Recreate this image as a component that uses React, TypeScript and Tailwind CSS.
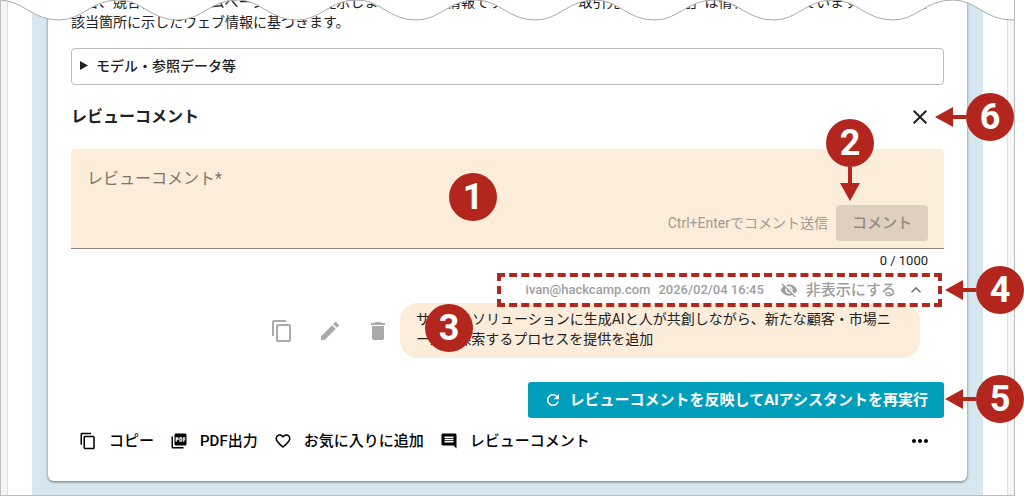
import { useState } from 'react';
import type { ReactNode } from 'react';
import {
  MdClose,
  MdComment,
  MdContentCopy,
  MdDelete,
  MdEdit,
  MdExpandLess,
  MdFavoriteBorder,
  MdMoreHoriz,
  MdPictureAsPdf,
  MdRefresh,
  MdVisibilityOff,
} from 'react-icons/md';

const MAX_LENGTH = 1000;

// Numbered red circle used by the manual's annotations
function Badge({ children }: { children: ReactNode }) {
  return (
    <span className="flex size-12 shrink-0 items-center justify-center rounded-full bg-[#b3261e] text-4xl leading-none font-bold text-white">
      {children}
    </span>
  );
}

function LeftArrow() {
  return (
    <svg width="31" height="20" viewBox="0 0 31 20" fill="#b3261e">
      <path d="M0 10 18 0v8h13v4H18v8z" />
    </svg>
  );
}

function DownArrow() {
  return (
    <svg width="20" height="34" viewBox="0 0 20 34" fill="#b3261e">
      <path d="M8 0h4v16h8L10 34 0 16h8z" />
    </svg>
  );
}

// Torn paper edge across the top of the page
function WaveEdge() {
  const half = 59.7;
  const start = -1.7;
  let line = `M${start} 0`;
  for (let i = 0; i < 17; i++) {
    const x = start + i * half;
    const from = i % 2 === 0 ? 0 : 20;
    const to = 20 - from;
    line += ` C${x + 24} ${from} ${x + 32} ${to} ${x + half} ${to}`;
  }
  return (
    <svg
      className="pointer-events-none absolute inset-x-0 top-0 h-6 w-full"
      viewBox="0 0 1015 24"
      preserveAspectRatio="none"
    >
      <path d={`${line} H1016 V-2 H-2z`} fill="#fff" />
      <path d={`${line} H1016`} fill="none" stroke="#aaa" />
    </svg>
  );
}

function FooterAction({ icon, label }: { icon: ReactNode; label: string }) {
  return (
    <button type="button" className="flex items-center gap-3 text-[15px] font-medium text-black">
      {icon}
      {label}
    </button>
  );
}

export default function App() {
  const [comment, setComment] = useState('');

  return (
    <div className="overflow-hidden bg-white pr-[9px] font-['Roboto','Noto_Sans_CJK_JP',sans-serif] text-[#212121]">
      <div className="relative border-x border-b border-[#bdbdbd] bg-[#f4f6f6] px-1.5">
        <div className="border-x border-[#e0e0e0] bg-white px-6">
          <div className="bg-[#d6e7ef] px-4 pb-3.5">
            <main className="flow-root rounded-b-md bg-white px-[23px] pb-7 shadow-[0_1px_3px_rgba(0,0,0,0.5)]">
              <p className="-mt-2 h-14 text-sm leading-5 whitespace-nowrap">
                場合、競合他社のホームページの情報を提示します。最新の情報です。ただし、「取引先企業の状況」は情報に基づいていますが、各項目
                <br />
                該当箇所に示したウェブ情報に基づきます。
              </p>

              <details className="rounded border border-[#bdbdbd] px-2 pb-0.5">
                <summary className="flex h-[33px] cursor-pointer list-none items-center gap-2 text-sm font-medium">
                  <svg width="8" height="9" viewBox="0 0 8 9" fill="currentColor">
                    <path d="M0 0 8 4.500 0 9z" />
                  </svg>
                  モデル・参照データ等
                </summary>
              </details>

              <div className="relative flex h-16 items-center justify-between">
                <h2 className="text-base font-bold">レビューコメント</h2>
                <button type="button" aria-label="閉じる" className="mr-3">
                  <MdClose size={24} />
                </button>
                <div className="absolute -right-[70px] flex items-center">
                  <LeftArrow />
                  <Badge>6</Badge>
                </div>
              </div>

              <div className="relative flex h-[100px] flex-col rounded-t border-b border-[#8b8178] bg-[#fcecda] px-4 pb-[7px]">
                <textarea
                  aria-label="レビューコメント"
                  placeholder="レビューコメント*"
                  maxLength={MAX_LENGTH}
                  value={comment}
                  onChange={(e) => setComment(e.target.value)}
                  className="block w-full flex-1 resize-none overflow-hidden bg-transparent pt-[18px] text-base outline-none placeholder:text-[#7e766d]"
                />
                <div className="flex items-center justify-end gap-2">
                  <span className="text-sm text-[#a09b95]">Ctrl+Enterでコメント送信</span>
                  <button
                    type="button"
                    disabled={comment.length === 0}
                    className="h-9 rounded bg-[#decfbf] px-4 text-[15px] font-medium text-[#958b80]"
                  >
                    コメント
                  </button>
                </div>
                <div className="absolute top-6 left-[378px]">
                  <Badge>1</Badge>
                </div>
                <div className="absolute -top-[30px] right-[70px] flex flex-col items-center">
                  <Badge>2</Badge>
                  <DownArrow />
                </div>
              </div>
              <p className="pr-4 text-right text-[13px] leading-6">
                {comment.length} / {MAX_LENGTH}
              </p>

              <div className="relative flex h-[30px] items-center justify-end gap-2 pt-1 pr-[18px] text-[#9e9e9e]">
                <span className="text-[13px] font-medium">ivan@hackcamp.com</span>
                <time className="text-[13px] font-medium">2026/02/04 16:45</time>
                <button type="button" className="mr-0.5 ml-2 flex items-center gap-2 text-[15px] font-medium">
                  <MdVisibilityOff size={18} />
                  非表示にする
                </button>
                <button type="button" aria-label="折りたたむ" className="text-[#757575]">
                  <MdExpandLess size={20} />
                </button>
                <div className="absolute top-0 right-0.5 z-10 h-[34px] w-[445px] border-4 border-dashed border-[#b3261e]" />
                <div className="absolute -top-[7px] -right-20 z-10 flex items-center">
                  <LeftArrow />
                  <Badge>4</Badge>
                </div>
              </div>

              <div className="flex items-center justify-end pr-6">
                <div className="flex items-center gap-6 pr-2.5 text-[#aaa]">
                  <button type="button" aria-label="コピー">
                    <MdContentCopy size={24} />
                  </button>
                  <button type="button" aria-label="編集">
                    <MdEdit size={24} />
                  </button>
                  <button type="button" aria-label="削除">
                    <MdDelete size={24} />
                  </button>
                </div>
                <div className="relative w-[520px] rounded-[18px] bg-[#fcecda] px-4 pt-1.5 pb-[9px] text-sm leading-5 whitespace-nowrap">
                  サービスソリューションに生成AIと人が共創しながら、新たな顧客・市場ニ
                  <br />
                  ーズを探索するプロセスを提供を追加
                  <div className="absolute top-px left-[25px]">
                    <Badge>3</Badge>
                  </div>
                </div>
              </div>

              <div className="relative mt-6 flex justify-end">
                <button
                  type="button"
                  className="flex h-9 items-center gap-2 rounded-[3px] bg-[#009ebb] px-4 text-[15px] font-bold text-white"
                >
                  <MdRefresh size={18} />
                  レビューコメントを反映してAIアシスタントを再実行
                </button>
                <div className="absolute -top-[7px] -right-20 flex items-center">
                  <LeftArrow />
                  <Badge>5</Badge>
                </div>
              </div>

              <div className="mt-[11px] flex items-center gap-4 pr-3 pl-2">
                <FooterAction icon={<MdContentCopy size={18} />} label="コピー" />
                <FooterAction icon={<MdPictureAsPdf size={18} />} label="PDF出力" />
                <FooterAction icon={<MdFavoriteBorder size={18} />} label="お気に入りに追加" />
                <FooterAction icon={<MdComment size={18} />} label="レビューコメント" />
                <button type="button" aria-label="その他" className="ml-auto text-black">
                  <MdMoreHoriz size={24} />
                </button>
              </div>
            </main>
          </div>
        </div>
        <WaveEdge />
      </div>
    </div>
  );
}
